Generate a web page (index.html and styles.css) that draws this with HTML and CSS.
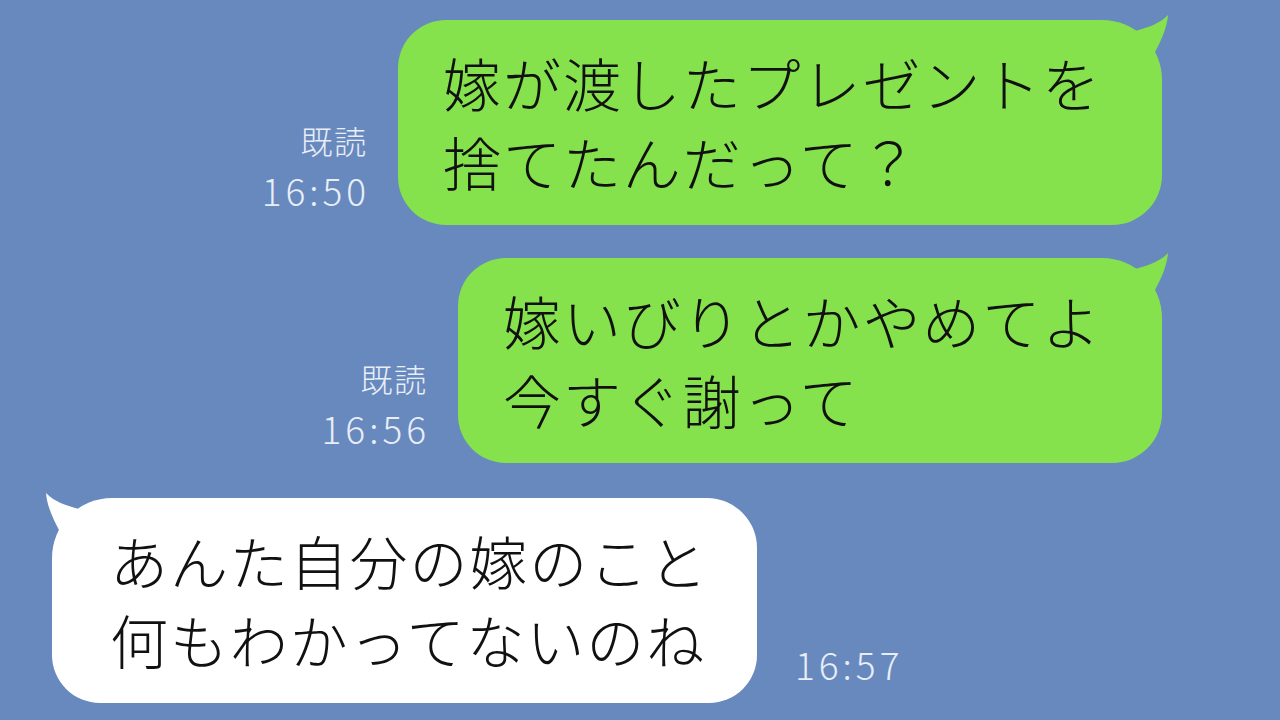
FILE: index.html
```html
<!DOCTYPE html>
<html lang="ja">
<head>
    <meta charset="UTF-8">
    <meta name="viewport" content="width=device-width, initial-scale=1.0">
    <title>トーク</title>
    <link rel="stylesheet" href="styles.css">
</head>
<body>

    <div class="chat">

        <!-- 送信メッセージ 1 -->
        <div class="row row-sent">
            <div class="meta">
                <span class="read">既読</span>
                <span class="time">16:50</span>
            </div>
            <div class="bubble bubble-green">
                嫁が渡したプレゼントを<br>捨てたんだって？
                <svg class="tail" viewBox="0 0 70 50" width="70" height="50"><path d="M30 21 C42 18 56 13 63 5 C62 17 57 29 50 42 L28 42 Z"/></svg>
            </div>
        </div>

        <!-- 送信メッセージ 2 -->
        <div class="row row-sent">
            <div class="meta">
                <span class="read">既読</span>
                <span class="time">16:56</span>
            </div>
            <div class="bubble bubble-green">
                嫁いびりとかやめてよ<br>今すぐ謝って
                <svg class="tail" viewBox="0 0 70 50" width="70" height="50"><path d="M30 21 C42 18 56 13 63 5 C62 17 57 29 50 42 L28 42 Z"/></svg>
            </div>
        </div>

        <!-- 受信メッセージ -->
        <div class="row row-recv">
            <div class="bubble bubble-white">
                あんた自分の嫁のこと<br>何もわかってないのね
                <svg class="tail" viewBox="0 0 70 50" width="70" height="50"><path d="M30 21 C42 18 56 13 63 5 C62 17 57 29 50 42 L28 42 Z"/></svg>
            </div>
            <div class="meta">
                <span class="time">16:57</span>
            </div>
        </div>

    </div>

</body>
</html>
```

FILE: styles.css
```css
/* リセット */
* {
    margin: 0;
    padding: 0;
    box-sizing: border-box;
}

body {
    width: 1280px;
    height: 720px;
    overflow: hidden;
    background: #6889be;
    font-family: "Noto Sans CJK JP", "Noto Sans", sans-serif;
    color: #111;
}

.chat {
    display: flex;
    flex-direction: column;
    gap: 33px;
    padding-top: 20px;
}

.row {
    display: flex;
    align-items: flex-end;
}

.row-sent {
    justify-content: flex-end;
    padding-right: 118px;
}

.row-recv {
    justify-content: flex-start;
    padding-left: 52px;
    margin-top: 2px;
}

/* 吹き出し */
.bubble {
    position: relative;
    font-size: 58px;
    font-weight: 300;
    line-height: 79px;
    letter-spacing: 1.9px;
    white-space: nowrap;
    height: 205px;
    padding-top: 23px;
}

.bubble-green {
    background: #85e24d;
    border-radius: 48px 60px 50px 48px;
    padding-left: 45px;
    padding-right: 60px;
}

.bubble-white {
    background: #fff;
    border-radius: 60px 50px 48px 48px;
    padding-left: 58px;
    padding-right: 48px;
}

.tail {
    position: absolute;
    top: -10px;
}

.bubble-green .tail {
    right: -13px;
    fill: #85e24d;
}

.bubble-white .tail {
    left: -13px;
    fill: #fff;
    transform: scaleX(-1);
}

/* 既読・時刻 */
.meta {
    display: flex;
    flex-direction: column;
    align-items: flex-end;
    color: #e8eef8;
    padding-bottom: 10px;
}

.row-sent .meta {
    margin-right: 32px;
}

.row-recv .meta {
    margin-left: 38px;
    padding-bottom: 14px;
}

.read {
    font-size: 32px;
    line-height: 40px;
    font-weight: 300;
    letter-spacing: 1.5px;
    margin-right: -1.5px;
    margin-bottom: 5px;
}

.time {
    font-size: 37px;
    line-height: 50px;
    font-weight: 300;
    letter-spacing: 4px;
    margin-right: -4px;
}
```
